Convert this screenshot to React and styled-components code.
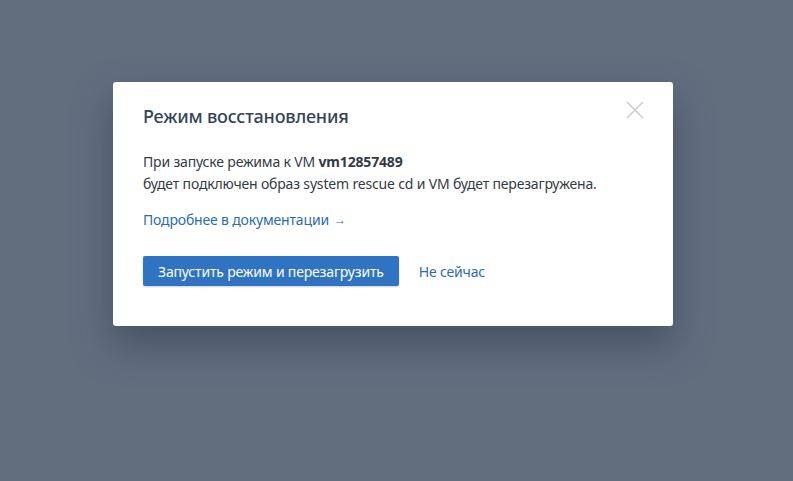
import styled, { createGlobalStyle } from "styled-components";

const Global = createGlobalStyle`
    html, body {
        margin: 0;
        padding: 0;
        height: 100%;
    }
    body {
        background: #626e7e;
        font-family: "Noto Sans", "Open Sans", sans-serif;
    }
`;

const Overlay = styled.div`
    min-height: 481px;
    padding: 82px 0 0 113px;
    box-sizing: border-box;
`;

const Modal = styled.div`
    position: relative;
    width: 560px;
    box-sizing: border-box;
    padding: 20px 30px 40px;
    background: #fff;
    border-radius: 3px;
    box-shadow: 0 18px 36px rgba(45, 60, 80, 0.55);
`;

const Close = styled.button`
    position: absolute;
    top: 18px;
    right: 28px;
    width: 20px;
    height: 20px;
    padding: 0;
    border: none;
    background: none;
    cursor: pointer;
    svg {
        display: block;
    }
`;

const Title = styled.h2`
    margin: 0;
    font-size: 18px;
    font-weight: 500;
    line-height: 28px;
    letter-spacing: -0.2px;
    color: #34445a;
`;

const Text = styled.p`
    margin: 21px 0 0;
    font-size: 14px;
    line-height: 22px;
    letter-spacing: -0.17px;
    color: #333b46;

    b {
        font-weight: 700;
    }
`;

const DocLink = styled.a`
    display: inline-block;
    margin-top: 14px;
    font-size: 14px;
    line-height: 22px;
    letter-spacing: -0.17px;
    color: #2b6cb6;
    text-decoration: none;

    span {
        font-size: 12px;
        margin-left: 5px;
        position: relative;
        top: -1px;
    }
`;

const Actions = styled.div`
    display: flex;
    align-items: center;
    gap: 20px;
    margin-top: 24px;
`;

const Primary = styled.button`
    height: 30px;
    padding: 0 15px;
    border: none;
    border-radius: 2px;
    background: #2f74c2;
    color: #fff;
    font-family: inherit;
    font-size: 14px;
    letter-spacing: -0.17px;
    box-shadow: 0 1px 2px rgba(0, 0, 0, 0.2);
    cursor: pointer;
`;

const Ghost = styled.button`
    padding: 0;
    border: none;
    background: none;
    color: #2b6cb6;
    font-family: inherit;
    font-size: 14px;
    letter-spacing: -0.17px;
    cursor: pointer;
`;

export default function App() {
    return (
        <>
            <Global />
            <Overlay>
                <Modal>
                    <Close aria-label="close">
                        <svg width="20" height="20" viewBox="0 0 20 20">
                            <path d="M2 2 L18 18 M18 2 L2 18" stroke="#c9cdd3" strokeWidth="1.6" fill="none" />
                        </svg>
                    </Close>
                    <Title>Режим восстановления</Title>
                    <Text>
                        При запуске режима к VM <b>vm12857489</b>
                        <br />
                        будет подключен образ system rescue cd и VM будет перезагружена.
                    </Text>
                    <DocLink href="#">
                        Подробнее в документации<span>→</span>
                    </DocLink>
                    <Actions>
                        <Primary>Запустить режим и перезагрузить</Primary>
                        <Ghost>Не сейчас</Ghost>
                    </Actions>
                </Modal>
            </Overlay>
        </>
    );
}
